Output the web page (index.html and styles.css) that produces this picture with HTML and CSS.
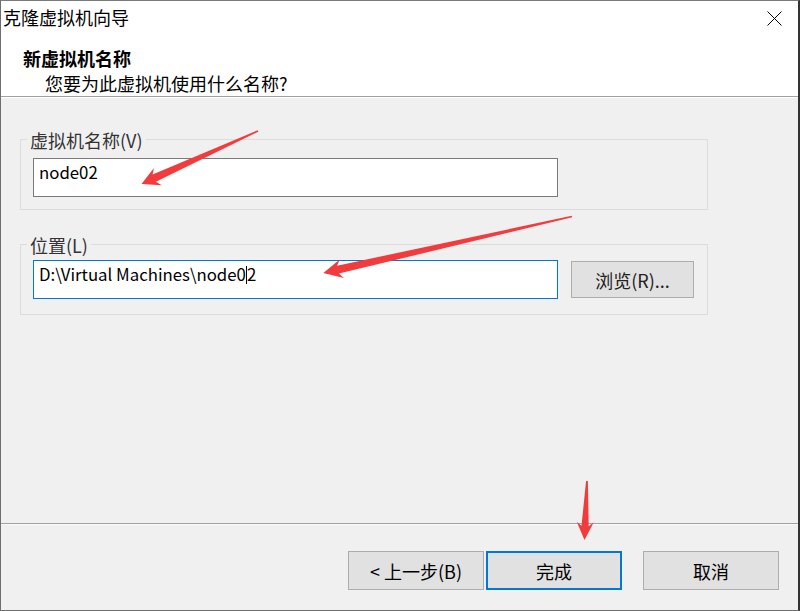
FILE: index.html
```html
<!DOCTYPE html>
<html lang="zh-CN">
<head>
<meta charset="utf-8">
<title>克隆虚拟机向导</title>
<link rel="stylesheet" href="styles.css">
</head>
<body>
<div class="window">
  <div class="top">
    <div class="titlebar">
      <span class="title">克隆虚拟机向导</span>
      <span class="close" aria-label="关闭">
        <svg width="15" height="15" viewBox="0 0 15 15"><path d="M0.5 0.5L14.5 14.5M14.5 0.5L0.5 14.5" stroke="#000" stroke-width="1" fill="none"/></svg>
      </span>
    </div>
    <div class="header">
      <div class="heading">新虚拟机名称</div>
      <div class="subtitle">您要为此虚拟机使用什么名称?</div>
    </div>
  </div>
  <div class="content">
    <div class="group">
      <div class="legend">虚拟机名称(V)</div>
      <div class="row row-name">
        <div class="input">node02</div>
      </div>
    </div>
    <div class="group group-loc">
      <div class="legend">位置(L)</div>
      <div class="row row-loc">
        <div class="input input-focus">D:\Virtual Machines\node0<span class="caret"></span>2</div>
        <div class="btn btn-browse">浏览(R)...</div>
      </div>
    </div>
  </div>
  <div class="footer">
    <div class="btn btn-foot btn-back">&lt; 上一步(B)</div>
    <div class="btn btn-foot btn-default">完成</div>
    <div class="btn btn-foot">取消</div>
  </div>
  <svg class="annotations" width="800" height="611" viewBox="0 0 800 611">
    <g fill="#f23b3d">
      <polygon transform="translate(141.5,184) rotate(155.5)" points="0,0 -18,-9.5 -14,-4 -128,-0.8 -128,0.8 -14,4 -18,9.5"/>
      <polygon transform="translate(323.3,273) rotate(167.2)" points="0,0 -19,-9.5 -15,-4 -255,-0.8 -255,0.8 -15,4 -19,9.5"/>
      <polygon transform="translate(584.5,540) rotate(92.4)" points="0,0 -18,-8.5 -14,-3.6 -59,-0.9 -59,0.9 -14,3.6 -18,8.5"/>
    </g>
  </svg>
</div>
</body>
</html>
```
FILE: styles.css
```css
* { box-sizing: border-box; }
html, body { margin: 0; padding: 0; }
body {
  width: 800px;
  height: 611px;
  overflow: hidden;
  font-family: "Noto Sans CJK SC", "Microsoft YaHei", sans-serif;
  font-size: 18px;
  color: #000;
}
.window {
  position: relative;
  width: 800px;
  height: 611px;
  display: flex;
  flex-direction: column;
  border-top: 1px solid #7a7a7a;
  border-left: 1px solid #6e6e6e;
  border-right: 2px solid #333;
  border-bottom: 1px solid #6e6e6e;
  background: #f0f0f0;
}
.top {
  background: #fff;
  border-bottom: 1px solid #a0a0a0;
}
.titlebar {
  height: 36px;
  display: flex;
  align-items: flex-start;
}
.title {
  padding-top: 4px;
  padding-left: 2px;
  line-height: 24px;
}
.close {
  margin-left: auto;
  margin-top: 10px;
  margin-right: 16px;
  width: 15px;
  height: 15px;
  display: block;
}
.close svg { display: block; }
.header {
  padding-top: 9px;
  padding-bottom: 1px;
}
.heading {
  padding-left: 22px;
  line-height: 24px;
  font-weight: 700;
}
.subtitle {
  margin-top: 1px;
  padding-left: 44px;
  line-height: 24px;
}
.content {
  flex: 1;
  border-top: 1px solid #fff;
  padding: 41px 0 0 19px;
}
.group {
  width: 688px;
  border: 1px solid #dcdcdc;
  padding-bottom: 12px;
}
.group-loc {
  margin-top: 34px;
  padding-bottom: 15px;
}
.legend {
  width: fit-content;
  margin-top: -10px;
  margin-left: 6px;
  padding: 0 3px;
  background: #f0f0f0;
  line-height: 20px;
  color: #333;
}
.row {
  display: flex;
  align-items: flex-start;
  margin-left: 12px;
}
.row-name { margin-top: 8px; }
.row-loc { margin-top: 5px; }
.input {
  width: 525px;
  height: 39px;
  border: 1px solid #7a7a7a;
  background: #fff;
  padding: 1px 5px 0;
  font-size: 16.8px;
  line-height: 24px;
  white-space: pre;
}
.input-focus { border-color: #0078d7; }
.caret {
  display: inline-block;
  width: 1px;
  height: 18px;
  background: #000;
  vertical-align: -3px;
}
.btn {
  display: flex;
  align-items: center;
  justify-content: center;
  background: #e1e1e1;
  border: 1px solid #adadad;
  line-height: 24px;
}
.btn-browse {
  margin-left: 13px;
  margin-top: 1px;
  width: 123px;
  height: 37px;
  color: #222;
}
.footer {
  height: 87px;
  border-top: 1px solid #a0a0a0;
  box-shadow: inset 0 1px #fafafa;
  display: flex;
  justify-content: flex-end;
  align-items: flex-start;
  padding-top: 27px;
  padding-right: 19px;
}
.btn-foot {
  width: 136px;
  height: 39px;
}
.btn-back { margin-right: 2px; }
.btn-default {
  border: 2px solid #0078d7;
  margin-right: 21px;
}
.annotations {
  position: absolute;
  left: -1px;
  top: -1px;
  pointer-events: none;
}
```
